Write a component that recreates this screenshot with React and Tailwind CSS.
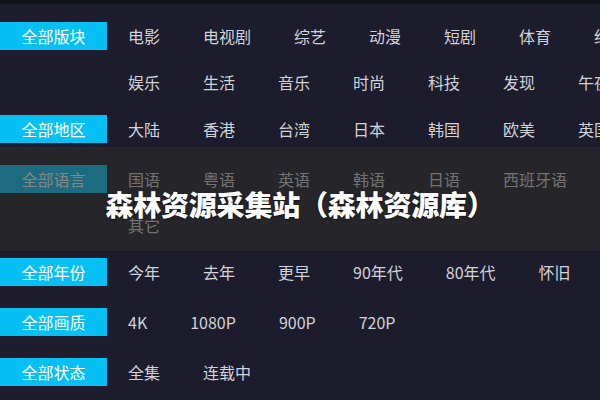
import React from "react";

const groups = [
  {
    label: "全部版块",
    mt: "mt-[9px]",
    lines: [
      ["电影", "电视剧", "综艺", "动漫", "短剧", "体育", "纪录片"],
      ["娱乐", "生活", "音乐", "时尚", "科技", "发现", "午夜"],
    ],
  },
  {
    label: "全部地区",
    mt: "mt-[1px]",
    lines: [["大陆", "香港", "台湾", "日本", "韩国", "欧美", "英国"]],
  },
  {
    label: "全部语言",
    mt: "mt-[4px]",
    lines: [["国语", "粤语", "英语", "韩语", "日语", "西班牙语"], ["其它"]],
  },
  {
    label: "全部年份",
    mt: "mt-[1px]",
    lines: [["今年", "去年", "更早", "90年代", "80年代", "怀旧"]],
  },
  {
    label: "全部画质",
    mt: "mt-[4px]",
    lines: [["4K", "1080P", "900P", "720P"]],
  },
  {
    label: "全部状态",
    mt: "mt-[4px]",
    lines: [["全集", "连载中"]],
  },
];

const App = () => {
  return (
    <div
      className="relative w-[600px] h-[400px] overflow-hidden bg-[#1c1c2c] border-t-4 border-[#12121c]"
      style={{ fontFamily: '"Noto Sans CJK SC", "Noto Sans", sans-serif' }}
    >
      {groups.map((g) => (
        <div key={g.label} className={"flex " + g.mt}>
          <div className="h-[46px] flex items-center shrink-0">
            <div className="w-[107px] h-[28px] bg-[#06c0f4] text-white text-[16px] flex items-center justify-center">
              {g.label}
            </div>
          </div>
          <div className="flex flex-col pl-[21px]">
            {g.lines.map((line, i) => (
              <div
                key={i}
                className="h-[46px] flex items-center gap-[43px] whitespace-nowrap text-[16px] text-[#d2d2d9]"
              >
                {line.map((item) => (
                  <span key={item}>{item}</span>
                ))}
              </div>
            ))}
          </div>
        </div>
      ))}

      {/* title banner over the list */}
      <div className="absolute left-0 right-0 top-[143px] h-[104px] bg-[rgba(44,44,42,0.58)] flex justify-center pt-[37px]">
        <div className="text-white text-[28px] font-black leading-[40px] tracking-[-0.2px] [text-shadow:0_1px_2px_rgba(0,0,0,0.5)]">
          森林资源采集站（森林资源库）
        </div>
      </div>
    </div>
  );
};

export default App;
